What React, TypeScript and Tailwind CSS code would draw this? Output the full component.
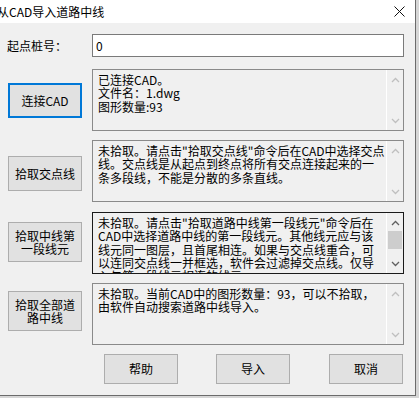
import React from 'react';

const FONT = "font-['Noto_Sans_CJK_SC','Noto_Sans',sans-serif]";

type BoxProps = {
  lines: string[];
  focused?: boolean;
  activeScroll?: boolean;
};

const Chevron = ({ up, active }: { up: boolean; active: boolean }) => (
  <svg width="9" height="6" viewBox="0 0 9 6" className="block">
    <path
      d={up ? 'M1 5 L4.5 1.5 L8 5' : 'M1 1 L4.5 4.5 L8 1'}
      fill="none"
      stroke={active ? '#606060' : '#bfbfbf'}
      strokeWidth="1.3"
    />
  </svg>
);

const InfoBox: React.FC<BoxProps> = ({ lines, focused = false, activeScroll = false }) => {
  return (
    <div
      className={`flex h-[62px] w-[312px] overflow-hidden border bg-[#f0f0f0] ${
        focused ? 'border-[#1a1a1a]' : 'border-[#8a8a8a]'
      }`}
    >
      {/* Text */}
      <div className="min-w-0 flex-1 overflow-hidden pl-[5px] pt-[3px] text-[12px] leading-[13.3px] whitespace-pre text-black">
        {lines.map((line, i) => (
          <div key={i}>{line}</div>
        ))}
      </div>
      {/* Scrollbar */}
      <div className="flex w-[17px] flex-shrink-0 flex-col border-l border-white bg-[#f0f0f0]">
        <div className="flex h-[17px] items-center justify-center pt-[2px]">
          <Chevron up active={activeScroll} />
        </div>
        <div className="flex-1 px-[1px]">
          {activeScroll && <div className="mt-[1px] h-[18px] bg-[#cdcdcd]" />}
        </div>
        <div className="flex h-[17px] items-center justify-center pb-[1px]">
          <Chevron up={false} active={activeScroll} />
        </div>
      </div>
    </div>
  );
};

const WinButton = ({
  children,
  focused = false,
  className = '',
}: {
  children: React.ReactNode;
  focused?: boolean;
  className?: string;
}) => (
  <div
    className={`flex w-[74px] items-center justify-center bg-[#e1e1e1] text-center text-[12px] leading-[13.3px] text-black ${
      focused ? 'border-2 border-[#0078d7]' : 'border border-[#adadad]'
    } ${className}`}
  >
    {children}
  </div>
);

export default function App() {
  return (
    <div className={`h-[398px] w-[419px] overflow-hidden bg-[#d6d6d6] ${FONT}`}>
      <div className="flex h-[396px] w-[416px] flex-col border-r border-b border-[#6b6b6b] bg-[#f0f0f0]">
        {/* Title bar */}
        <div className="flex h-[23px] flex-shrink-0 items-center justify-between bg-white">
          <span className="-ml-[3px] text-[12px] leading-none text-black">从CAD导入道路中线</span>
          <svg width="11" height="11" viewBox="0 0 11 11" className="mr-[10px] mb-[1px]">
            <path d="M0.5 0.5 L10.5 10.5 M10.5 0.5 L0.5 10.5" stroke="#111" strokeWidth="1" />
          </svg>
        </div>

        {/* Start station */}
        <div className="mt-[11px] flex h-[23px] items-center">
          <span className="w-[92px] pl-[7px] text-[12px] text-black">起点桩号：</span>
          <div className="flex h-[23px] w-[312px] items-center border border-[#7a7a7a] bg-white pl-[3px] text-[12px] text-black">
            0
          </div>
        </div>

        {/* Connect CAD */}
        <div className="mt-[12px] flex">
          <div className="w-[92px] pl-[8px]">
            <WinButton focused className="mt-[14px] h-[35px]">连接CAD</WinButton>
          </div>
          <InfoBox lines={['已连接CAD。', '文件名：1.dwg', '图形数量:93']} />
        </div>

        {/* Intersection line */}
        <div className="mt-[9px] flex">
          <div className="w-[92px] pl-[8px]">
            <WinButton className="mt-[16px] h-[35px]">拾取交点线</WinButton>
          </div>
          <InfoBox
            lines={[
              '未拾取。请点击"拾取交点线"命令后在CAD中选择交点',
              '线。交点线是从起点到终点将所有交点连接起来的一',
              '条多段线，不能是分散的多条直线。',
            ]}
          />
        </div>

        {/* First segment */}
        <div className="mt-[10px] flex">
          <div className="w-[92px] pl-[8px]">
            <WinButton className="mt-[10px] h-[40px]">
              拾取中线第
              <br />
              一段线元
            </WinButton>
          </div>
          <InfoBox
            focused
            activeScroll
            lines={[
              '未拾取。请点击"拾取道路中线第一段线元"命令后在',
              'CAD中选择道路中线的第一段线元。其他线元应与该',
              '线元同一图层，且首尾相连。如果与交点线重合，可',
              '以连同交点线一并框选，软件会过滤掉交点线。仅导',
              '入与第一段线元相连的线元。',
            ]}
          />
        </div>

        {/* All centerlines */}
        <div className="mt-[9px] flex">
          <div className="w-[92px] pl-[8px]">
            <WinButton className="mt-[8px] h-[40px]">
              拾取全部道
              <br />
              路中线
            </WinButton>
          </div>
          <InfoBox
            lines={['未拾取。当前CAD中的图形数量：93，可以不拾取，', '由软件自动搜索道路中线导入。']}
          />
        </div>

        {/* Footer buttons */}
        <div className="mt-[9px] flex pl-[104px]">
          <WinButton className="h-[30px]">帮助</WinButton>
          <WinButton className="ml-[38px] h-[30px]">导入</WinButton>
          <WinButton className="ml-[39px] h-[30px]">取消</WinButton>
        </div>
      </div>
    </div>
  );
}
